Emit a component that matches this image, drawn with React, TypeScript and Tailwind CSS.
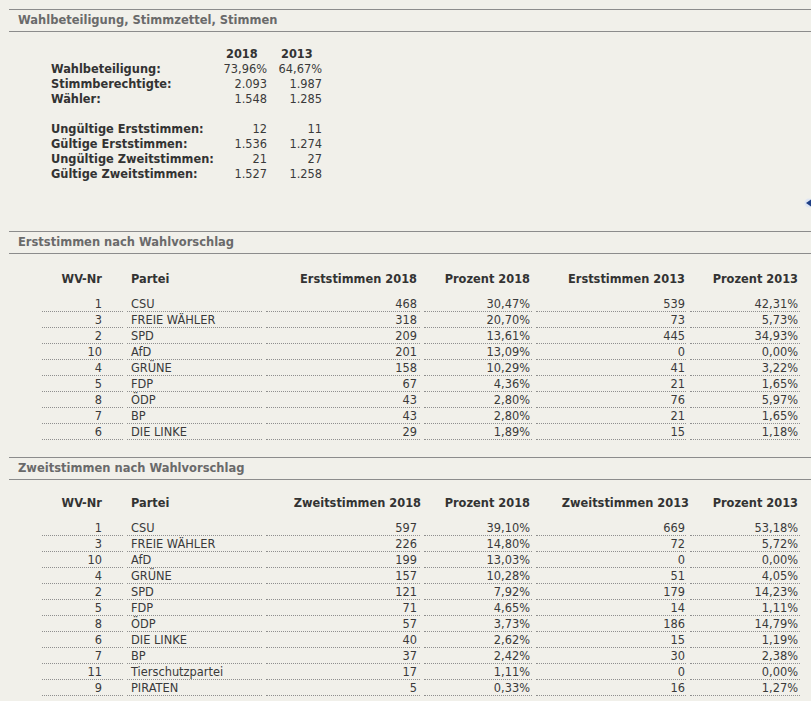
import React from "react";

type Row = [string, string, string, string, string, string];

const erst: Row[] = [
  ["1", "CSU", "468", "30,47%", "539", "42,31%"],
  ["3", "FREIE WÄHLER", "318", "20,70%", "73", "5,73%"],
  ["2", "SPD", "209", "13,61%", "445", "34,93%"],
  ["10", "AfD", "201", "13,09%", "0", "0,00%"],
  ["4", "GRÜNE", "158", "10,29%", "41", "3,22%"],
  ["5", "FDP", "67", "4,36%", "21", "1,65%"],
  ["8", "ÖDP", "43", "2,80%", "76", "5,97%"],
  ["7", "BP", "43", "2,80%", "21", "1,65%"],
  ["6", "DIE LINKE", "29", "1,89%", "15", "1,18%"],
];

const zweit: Row[] = [
  ["1", "CSU", "597", "39,10%", "669", "53,18%"],
  ["3", "FREIE WÄHLER", "226", "14,80%", "72", "5,72%"],
  ["10", "AfD", "199", "13,03%", "0", "0,00%"],
  ["4", "GRÜNE", "157", "10,28%", "51", "4,05%"],
  ["2", "SPD", "121", "7,92%", "179", "14,23%"],
  ["5", "FDP", "71", "4,65%", "14", "1,11%"],
  ["8", "ÖDP", "57", "3,73%", "186", "14,79%"],
  ["6", "DIE LINKE", "40", "2,62%", "15", "1,19%"],
  ["7", "BP", "37", "2,42%", "30", "2,38%"],
  ["11", "Tierschutzpartei", "17", "1,11%", "0", "0,00%"],
  ["9", "PIRATEN", "5", "0,33%", "16", "1,27%"],
];

function SectionHeader({ title, className = "" }: { title: string; className?: string }) {
  return (
    <div
      className={
        "ml-[9px] h-[23px] border-y border-[#8c8c8c] pl-[9px] text-[11.5px] font-bold leading-[21px] text-[#6a6a6a] " +
        className
      }
    >
      {title}
    </div>
  );
}

function VoteTable({
  label,
  rows,
  className = "",
  wide = false,
}: {
  label: string;
  rows: Row[];
  className?: string;
  wide?: boolean;
}) {
  const cell = "h-[16px] border-b border-dotted border-[#8f8f8f] leading-[16px] text-[11.4px] text-[#3a3a3a]";
  const head = "h-[25px] whitespace-nowrap text-[11.4px] font-bold leading-[17px] text-[#333]";
  return (
    <div className={"ml-[42px] grid grid-cols-[81px_135px_154px_108px_150px_110px] gap-x-[4px] " + className}>
      <div className={head + " pr-[21px] text-right"}>WV-Nr</div>
      <div className={head + " pl-[4px]"}>Partei</div>
      <div className={head + " text-right " + (wide ? "-mr-[1px]" : "pr-[3px]")}>{label} 2018</div>
      <div className={head + " pr-[2px] text-right"}>Prozent 2018</div>
      <div className={head + " text-right " + (wide ? "-mr-[3px]" : "pr-[1px]")}>{label} 2013</div>
      <div className={head + " pr-[2px] text-right"}>Prozent 2013</div>
      {rows.map((r, i) => (
        <React.Fragment key={i}>
          <div className={cell + " pr-[21px] text-right"}>{r[0]}</div>
          <div className={cell + " pl-[4px]"}>{r[1]}</div>
          <div className={cell + " pr-[3px] text-right"}>{r[2]}</div>
          <div className={cell + " pr-[2px] text-right"}>{r[3]}</div>
          <div className={cell + " pr-[1px] text-right"}>{r[4]}</div>
          <div className={cell + " pr-[2px] text-right"}>{r[5]}</div>
        </React.Fragment>
      ))}
    </div>
  );
}

const summary: [string, string, string][] = [
  ["Wahlbeteiligung:", "73,96%", "64,67%"],
  ["Stimmberechtigte:", "2.093", "1.987"],
  ["Wähler:", "1.548", "1.285"],
  ["", "", ""],
  ["Ungültige Erststimmen:", "12", "11"],
  ["Gültige Erststimmen:", "1.536", "1.274"],
  ["Ungültige Zweitstimmen:", "21", "27"],
  ["Gültige Zweitstimmen:", "1.527", "1.258"],
];

export default function App() {
  return (
    <div className="relative h-[701px] w-[811px] overflow-hidden bg-[#f1f0ea] pt-[9px] font-['DejaVu_Sans',Verdana,sans-serif]">
      <SectionHeader title="Wahlbeteiligung, Stimmzettel, Stimmen" />

      <div className="ml-[51px] mt-[15px] grid grid-cols-[170px_46px_55px] text-[11.4px] leading-[15px] text-[#3a3a3a]">
        <div className="h-[15px]" />
        <div className="pl-[5px] font-bold text-[#333]">2018</div>
        <div className="pl-[14px] font-bold text-[#333]">2013</div>
        {summary.map((s, i) => (
          <React.Fragment key={i}>
            <div className="h-[15px] whitespace-nowrap font-bold text-[#333]">{s[0]}</div>
            <div className="h-[15px] text-right">{s[1]}</div>
            <div className="h-[15px] text-right">{s[2]}</div>
          </React.Fragment>
        ))}
      </div>

      <SectionHeader title="Erststimmen nach Wahlvorschlag" className="mt-[49px]" />
      <VoteTable label="Erststimmen" rows={erst} className="mt-[17px]" />

      <SectionHeader title="Zweitstimmen nach Wahlvorschlag" className="mt-[17px]" />
      <VoteTable label="Zweitstimmen" rows={zweit} className="mt-[15px]" wide />

      <svg className="absolute left-[802px] top-[197px]" width="12" height="12" viewBox="0 0 12 12">
        <circle cx="7" cy="6" r="4.5" fill="#dfe6f3" />
        <path d="M4 6 L9 2.5 L9 9.5 Z" fill="#1f3f85" />
      </svg>
    </div>
  );
}
